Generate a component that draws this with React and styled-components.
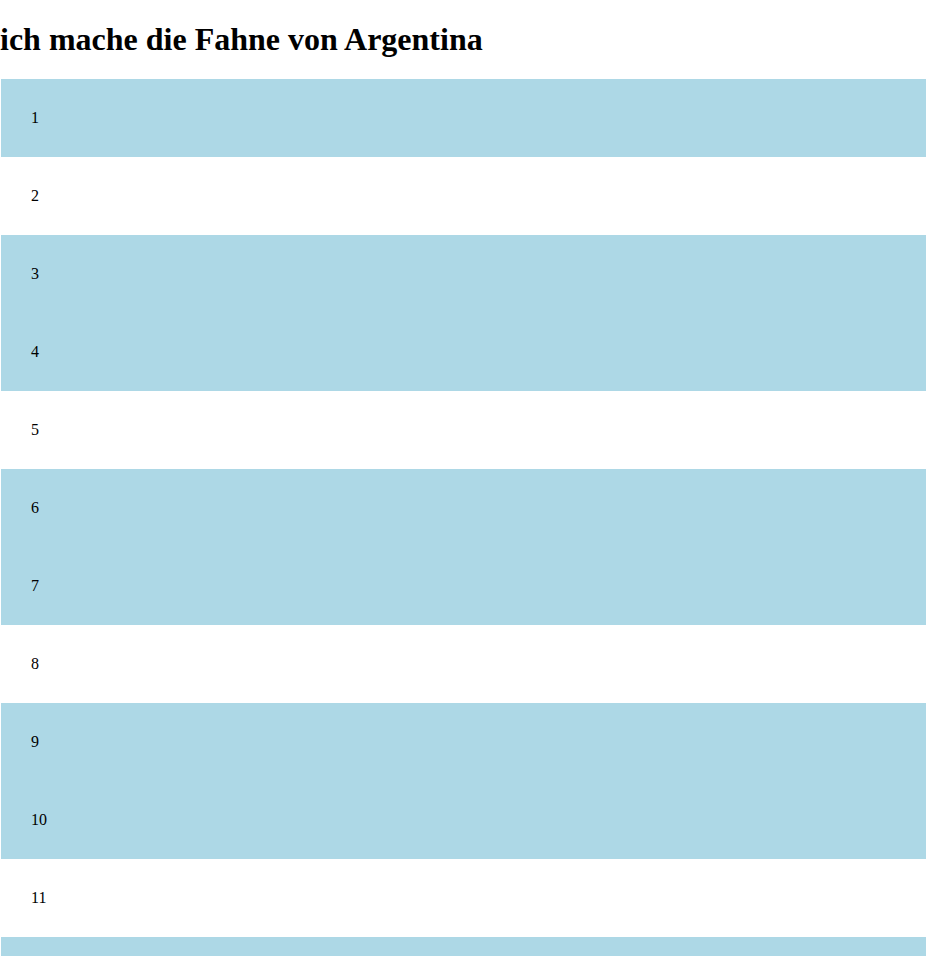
import React from "react";
import styled, { createGlobalStyle } from "styled-components";

const GlobalStyle = createGlobalStyle`
  body {
    margin: 0;
    background: #fff;
    font-family: "Liberation Serif", "Times New Roman", serif;
    color: #000;
  }
`;

const Title = styled.h1`
  font-size: 32px;
  font-weight: bold;
  margin: 21px 0 0;
  height: 58px;
  line-height: 37px;
`;

const Stripes = styled.div`
  display: flex;
  flex-direction: column;
  width: 925px;
  margin-left: 1px;
`;

const Stripe = styled.div`
  display: flex;
  align-items: center;
  height: 78px;
  padding-left: 30px;
  font-size: 16px;
  background: ${(props) => (props.$blue ? "#add8e6" : "#fff")};
`;

const rows = Array.from({ length: 14 }, (_, i) => i + 1);

export default function App() {
  return (
    <>
      <GlobalStyle />
      <Title>ich mache die Fahne von Argentina</Title>
      <Stripes>
        {rows.map((n) => (
          <Stripe key={n} $blue={n % 3 !== 2}>
            {n}
          </Stripe>
        ))}
      </Stripes>
    </>
  );
}
